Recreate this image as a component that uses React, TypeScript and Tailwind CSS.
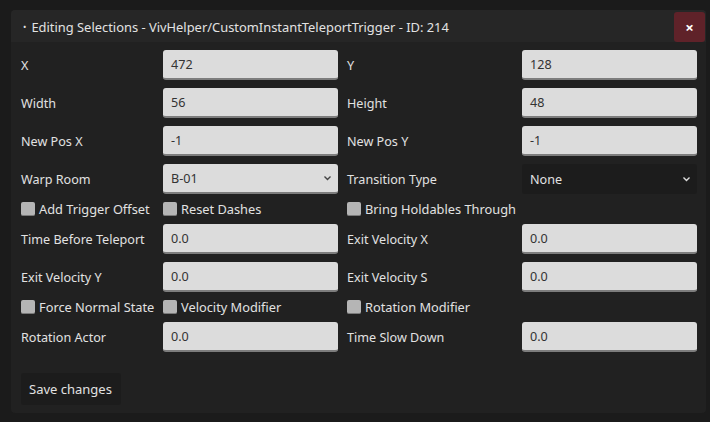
import React from 'react';

const Chevron: React.FC<{ dark?: boolean }> = ({ dark }) => (
  <svg width="9" height="6" viewBox="0 0 9 6" className="shrink-0">
    <path d="M1.5 1.5 L4.5 4.5 L7.5 1.5" fill="none" stroke={dark ? '#444' : '#ddd'} strokeWidth="1.4" />
  </svg>
);

const Field: React.FC<{ value: string }> = ({ value }) => (
  <div className="h-[30px] rounded-[3px] bg-[#dcdcdc] border-b-2 border-[#7d7d7d] flex items-center px-2 pt-[2px] text-[#333]">
    {value}
  </div>
);

const Select: React.FC<{ value: string; light?: boolean }> = ({ value, light }) =>
  light ? (
    <div className="h-[30px] rounded-[3px] bg-[#dcdcdc] border-b-2 border-[#7d7d7d] flex items-center justify-between pl-2 pr-[6px] text-[#333]">
      <span className="pt-[2px]">{value}</span>
      <Chevron dark />
    </div>
  ) : (
    <div className="h-[30px] rounded-[3px] bg-[#1c1c1c] flex items-center justify-between pl-2 pr-[6px] text-[#e2e2e2]">
      <span className="pt-[2px]">{value}</span>
      <Chevron />
    </div>
  );

const Check: React.FC<{ label: string }> = ({ label }) => (
  <div className="h-[14px] flex items-center gap-[4px] whitespace-nowrap">
    <span className="w-[14px] h-[14px] rounded-[2px] bg-[#b5b5b5] border-b border-[#7a7a7a] shrink-0" />
    <span className="pt-[2px] text-[12.8px]">{label}</span>
  </div>
);

const Label: React.FC<{ text: string }> = ({ text }) => (
  <div className="h-[30px] flex items-center pt-[2px]">{text}</div>
);

export default function App() {
  return (
    <div
      className="w-[710px] h-[422px] bg-[#1b1b1b] pt-[10px] pl-[11px] text-[12.6px] text-[#e2e2e2]"
      style={{ fontFamily: '"Noto Sans", sans-serif' }}
    >
      <div className="w-[695px] h-[403px] rounded-[4px] bg-[#212121] flex flex-col overflow-hidden">
        <div className="h-[32px] bg-[#262626] flex items-center pl-[12px] pr-px">
          <span className="text-[9px] mr-[5px] pt-[2px]">•</span>
          <span className="flex-1 pt-[3px] text-[12.9px]">Editing Selections - VivHelper/CustomInstantTeleportTrigger - ID: 214</span>
          <div className="w-[31px] h-[30px] mt-[2px] rounded-[3px] bg-[#5f2229] flex items-center justify-center text-white text-[15px] font-bold">
            ×
          </div>
        </div>

        <div className="pt-[8px] pl-[10px] pr-[9px] flex flex-col gap-[8px]">
          <div className="grid grid-cols-[133px_175px_166px_175px] gap-x-[9px] gap-y-[8px] items-center">
            <Label text="X" />
            <Field value="472" />
            <Label text="Y" />
            <Field value="128" />

            <Label text="Width" />
            <Field value="56" />
            <Label text="Height" />
            <Field value="48" />

            <Label text="New Pos X" />
            <Field value="-1" />
            <Label text="New Pos Y" />
            <Field value="-1" />

            <Label text="Warp Room" />
            <Select value="B-01" light />
            <Label text="Transition Type" />
            <Select value="None" />

            <Check label="Add Trigger Offset" />
            <Check label="Reset Dashes" />
            <Check label="Bring Holdables Through" />
            <div />

            <Label text="Time Before Teleport" />
            <Field value="0.0" />
            <Label text="Exit Velocity X" />
            <Field value="0.0" />

            <Label text="Exit Velocity Y" />
            <Field value="0.0" />
            <Label text="Exit Velocity S" />
            <Field value="0.0" />

            <Check label="Force Normal State" />
            <Check label="Velocity Modifier" />
            <Check label="Rotation Modifier" />
            <div />

            <Label text="Rotation Actor" />
            <Field value="0.0" />
            <Label text="Time Slow Down" />
            <Field value="0.0" />
          </div>

          <div className="mt-[13px]">
            <button className="h-[32px] w-[100px] pl-[8px] pt-[2px] text-left rounded-[3px] bg-[#1c1c1c] text-[#e2e2e2] text-[13px]">
              Save changes
            </button>
          </div>
        </div>
      </div>
    </div>
  );
}
